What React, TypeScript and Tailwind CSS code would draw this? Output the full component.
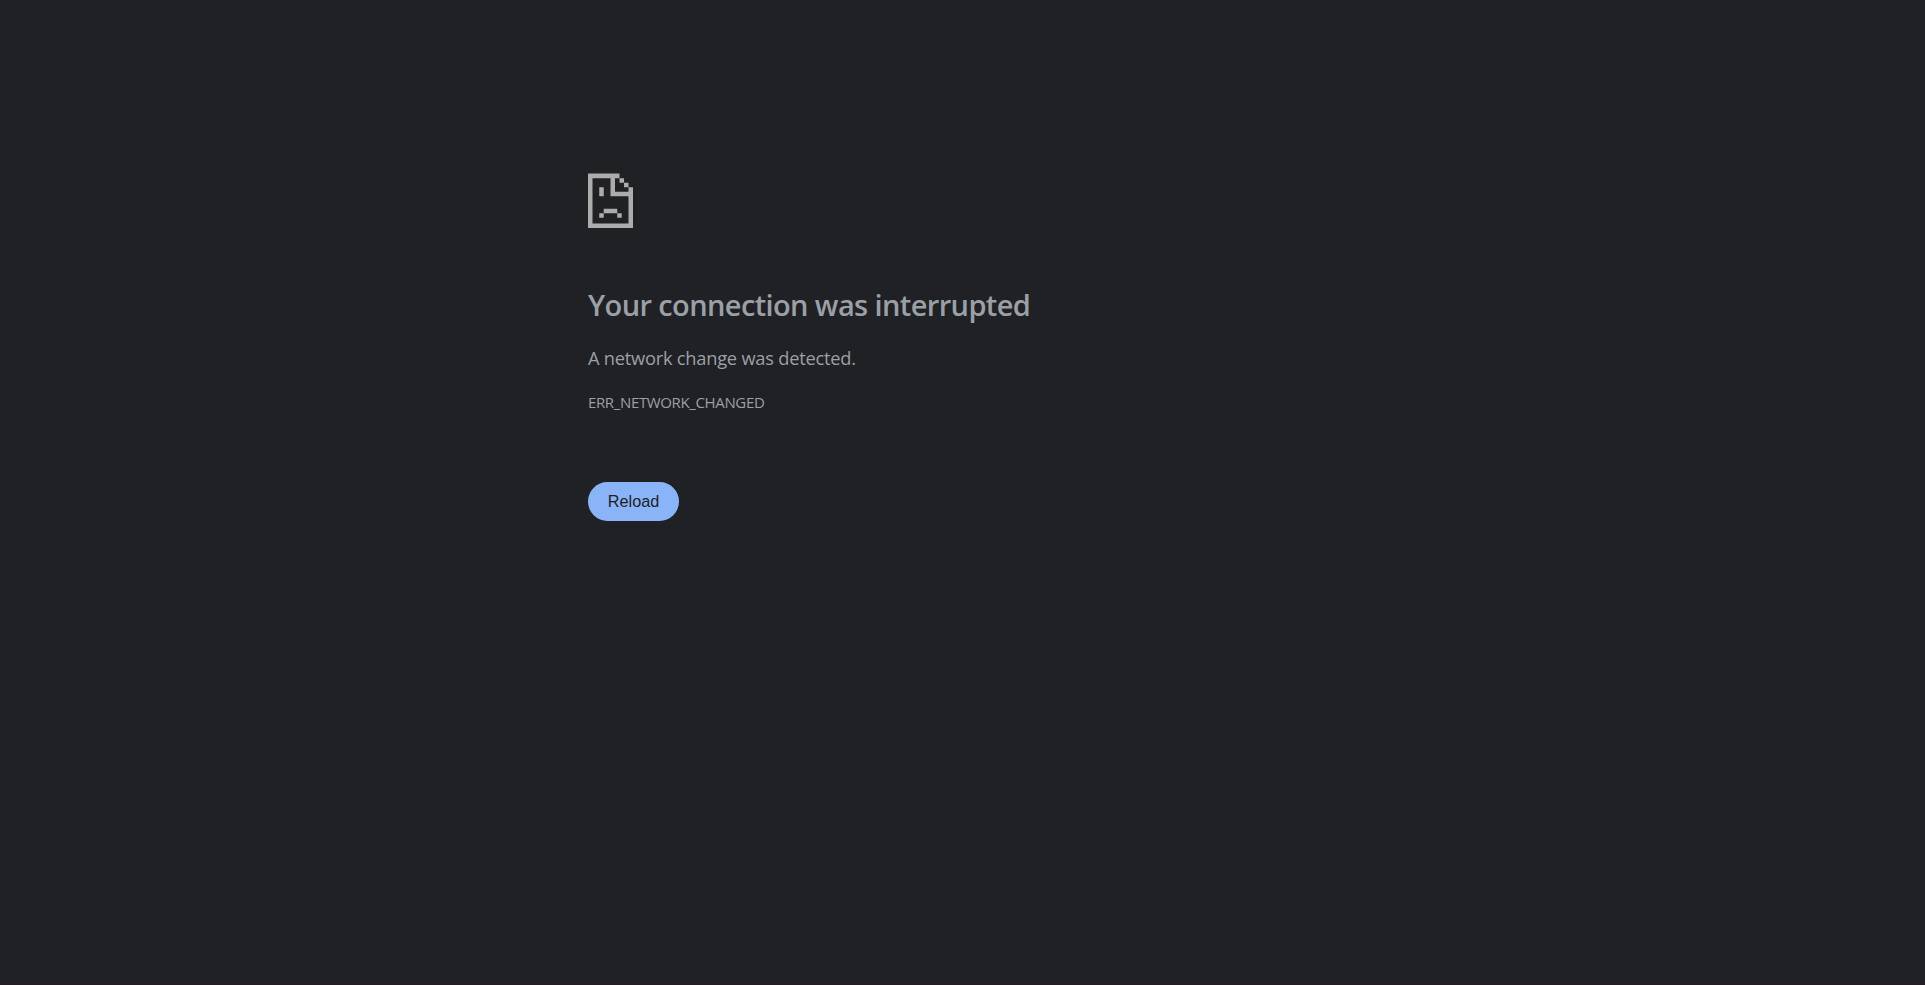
export default function App() {
  return (
    <div className="flex h-[985px] w-full flex-col border-b border-[#261b22] bg-[#202124] text-[#9aa0a6]">
      <main className="ml-[588px] flex flex-col items-start pt-[173px] font-['Open_Sans',sans-serif]">
        <svg className="h-[55px] w-[45px]" viewBox="0 0 45 55" fill="#acacac">
          <g transform="translate(0 0.6) scale(4.5 4.53)">
            <path d="M0 0H7V1H6V4H10V5H5V1H1V11H9V5H10V12H0Z" />
            <path d="M7 1h1v1h-1zM8 2h1v1h-1zM9 3h1v2h-1zM2.5 3h1v2h-1zM3.5 7.75h3v1h-3zM2.5 8.75h1v1h-1zM6.5 8.75h1v1h-1z" />
          </g>
        </svg>
        <h1 className="mt-[58px] whitespace-nowrap text-[29px] leading-[38px] font-semibold tracking-[-0.61px]">
          <span>Your connection was interrupted</span>
        </h1>
        <p className="mt-[21px] whitespace-nowrap text-[18.25px] leading-[26px] tracking-[-0.23px]"><span>A network change was detected.</span></p>
        <div className="mt-[20px] whitespace-nowrap text-[15px] leading-[22px] tracking-[-0.36px]"><span>ERR_NETWORK_CHANGED</span></div>
        <button className="mt-[69px] flex h-[39px] w-[91px] items-center justify-center rounded-full bg-[#8ab4f8] pb-px font-['Liberation_Sans',sans-serif] text-[16.25px] text-[#202124]">
          Reload
        </button>
      </main>
    </div>
  );
}
